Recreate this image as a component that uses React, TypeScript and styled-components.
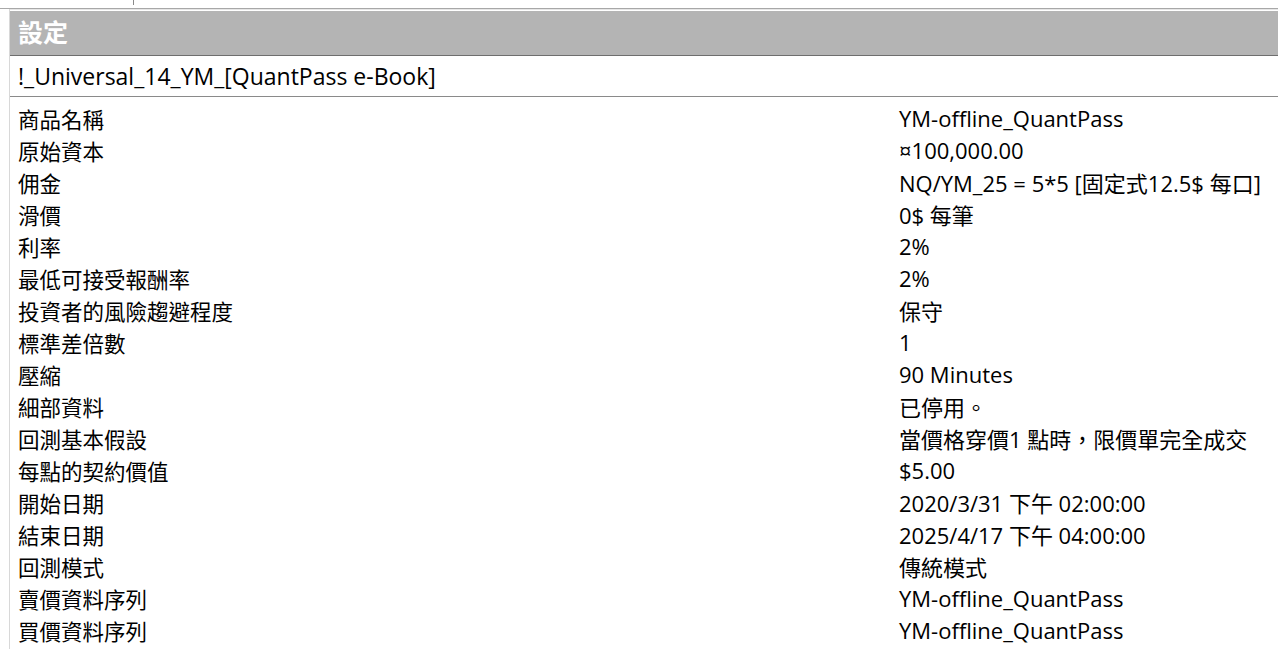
import React from "react";
import styled, { createGlobalStyle } from "styled-components";

const Global = createGlobalStyle`
  html, body { margin: 0; padding: 0; background: #fff; }
  body { font-family: "Open Sans", "Noto Sans CJK TC", sans-serif; color: #000; }
`;

const Page = styled.div`
  width: 1278px;
  height: 649px;
  overflow: hidden;
  display: flex;
  flex-direction: column;
`;

const TopStrip = styled.div`
  height: 8px;
  display: flex;
  border-bottom: 1px solid #a8a8a8;
`;

const TopCell = styled.div<{ w: number }>`
  width: ${(p) => p.w}px;
  border-right: 1px solid #8a8a8a;
  height: 5px;
`;

const Body = styled.div`
  flex: 1;
  display: flex;
`;

const Gutter = styled.div`
  width: 9px;
  border-right: 1px solid #d8d8d8;
  flex-shrink: 0;
`;

const Panel = styled.div`
  flex: 1;
  display: flex;
  flex-direction: column;
  padding-top: 1px;
  border-top: 1px solid #e6e6e6;
`;

const Header = styled.div`
  height: 45px;
  box-sizing: border-box;
  padding-bottom: 5px;
  background: #b4b4b4;
  border-bottom: 1px solid #6e6e6e;
  display: flex;
  align-items: center;
  padding-left: 8px;
  font-family: "Noto Sans CJK TC", sans-serif;
  font-weight: 700;
  font-size: 25px;
  color: #fff;
`;

const Title = styled.div`
  height: 40px;
  border-bottom: 1px solid #8a8a8a;
  display: flex;
  align-items: center;
  padding-left: 8px;
  font-size: 23px;
  font-family: "Open Sans", "Noto Sans CJK TC", sans-serif;
`;

const Table = styled.div`
  padding-top: 5px;
  display: flex;
  flex-direction: column;
`;

const Row = styled.div`
  height: 32px;
  display: grid;
  grid-template-columns: 880px 1fr;
  align-items: center;
  font-size: 22px;
  white-space: nowrap;
`;

const Label = styled.div`
  padding-left: 8px;
  font-size: 21.5px;
`;

const Value = styled.div`
  padding-left: 9px;
`;

const rows: [string, string][] = [
  ["商品名稱", "YM-offline_QuantPass"],
  ["原始資本", "¤100,000.00"],
  ["佣金", "NQ/YM_25 = 5*5 [固定式12.5$ 每口]"],
  ["滑價", "0$ 每筆"],
  ["利率", "2%"],
  ["最低可接受報酬率", "2%"],
  ["投資者的風險趨避程度", "保守"],
  ["標準差倍數", "1"],
  ["壓縮", "90 Minutes"],
  ["細部資料", "已停用。"],
  ["回測基本假設", "當價格穿價1 點時，限價單完全成交"],
  ["每點的契約價值", "$5.00"],
  ["開始日期", "2020/3/31 下午 02:00:00"],
  ["結束日期", "2025/4/17 下午 04:00:00"],
  ["回測模式", "傳統模式"],
  ["賣價資料序列", "YM-offline_QuantPass"],
  ["買價資料序列", "YM-offline_QuantPass"],
];

export default function App() {
  return (
    <Page>
      <Global />
      <TopStrip>
        <TopCell w={133} />
      </TopStrip>
      <Body>
        <Gutter />
        <Panel>
          <Header>設定</Header>
          <Title>!_Universal_14_YM_[QuantPass e-Book]</Title>
          <Table>
            {rows.map(([k, v]) => (
              <Row key={k}>
                <Label>{k}</Label>
                <Value>{v}</Value>
              </Row>
            ))}
          </Table>
        </Panel>
      </Body>
    </Page>
  );
}
